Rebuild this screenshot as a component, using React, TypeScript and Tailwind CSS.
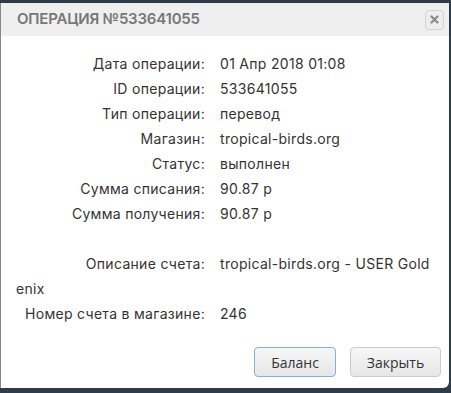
import React from "react";

const rows: [string, string][] = [
  ["Дата операции:", "01 Апр 2018 01:08"],
  ["ID операции:", "533641055"],
  ["Тип операции:", "перевод"],
  ["Магазин:", "tropical-birds.org"],
  ["Статус:", "выполнен"],
  ["Сумма списания:", "90.87 р"],
  ["Сумма получения:", "90.87 р"],
];

function Row({ label, value }: { label: string; value: string }) {
  return (
    <div className="leading-[25px] text-[14px] tracking-[0.3px] text-[#333]">
      <span className="inline-block w-[189px] text-right mr-[15px]">{label}</span>
      <span>{value}</span>
    </div>
  );
}

export default function App() {
  return (
    <div className="w-[451px] h-[393px] bg-[#2f3b46] pt-[3px] overflow-hidden">
      <div className="w-[449px] h-[385px] bg-white rounded-br-[6px] border-l border-[#8a8a8a] flex flex-col" style={{ fontFamily: "Inter, 'Noto Sans', sans-serif" }}>
        <div className="h-[33px] bg-[#efefef] flex items-center justify-between pl-[16px] pr-[5px]">
          <div className="text-[15px] font-semibold tracking-[-0.2px] text-[#777]">ОПЕРАЦИЯ №533641055</div>
          <button className="w-[19px] h-[20px] rounded-[4px] border border-[#d3d3d3] bg-[#ededed] flex items-center justify-center">
            <svg width="9" height="9" viewBox="0 0 9 9"><path d="M1.5 1.5 L7.5 7.5 M7.5 1.5 L1.5 7.5" stroke="#888" strokeWidth="2.2" strokeLinecap="round" /></svg>
          </button>
        </div>
        <div className="pl-[15px] pt-[15px]">
          {rows.map(([l, v]) => (
            <Row key={l} label={l} value={v} />
          ))}
          <div className="h-[25px]" />
          <div className="leading-[25px] text-[14px] tracking-[0.3px] text-[#333] pr-[16px] break-all">
            <span className="inline-block w-[189px] text-right mr-[15px] break-normal">Описание счета:</span>
            <span>tropical-birds.org - USER Goldenix</span>
          </div>
          <Row label="Номер счета в магазине:" value="246" />
        </div>
        <div className="flex justify-end gap-[14px] pr-[8px] mt-[21px]" style={{ fontFamily: "'Open Sans', sans-serif" }}>
          <button className="w-[82px] h-[30px] rounded-[4px] border border-[#85aee0] bg-gradient-to-b from-[#f7f7f7] to-[#e6e6e6] text-[14px] text-[#333]">Баланс</button>
          <button className="w-[91px] h-[30px] rounded-[4px] border border-[#ccc] bg-gradient-to-b from-[#f7f7f7] to-[#e6e6e6] text-[14px] text-[#333]">Закрыть</button>
        </div>
      </div>
    </div>
  );
}
